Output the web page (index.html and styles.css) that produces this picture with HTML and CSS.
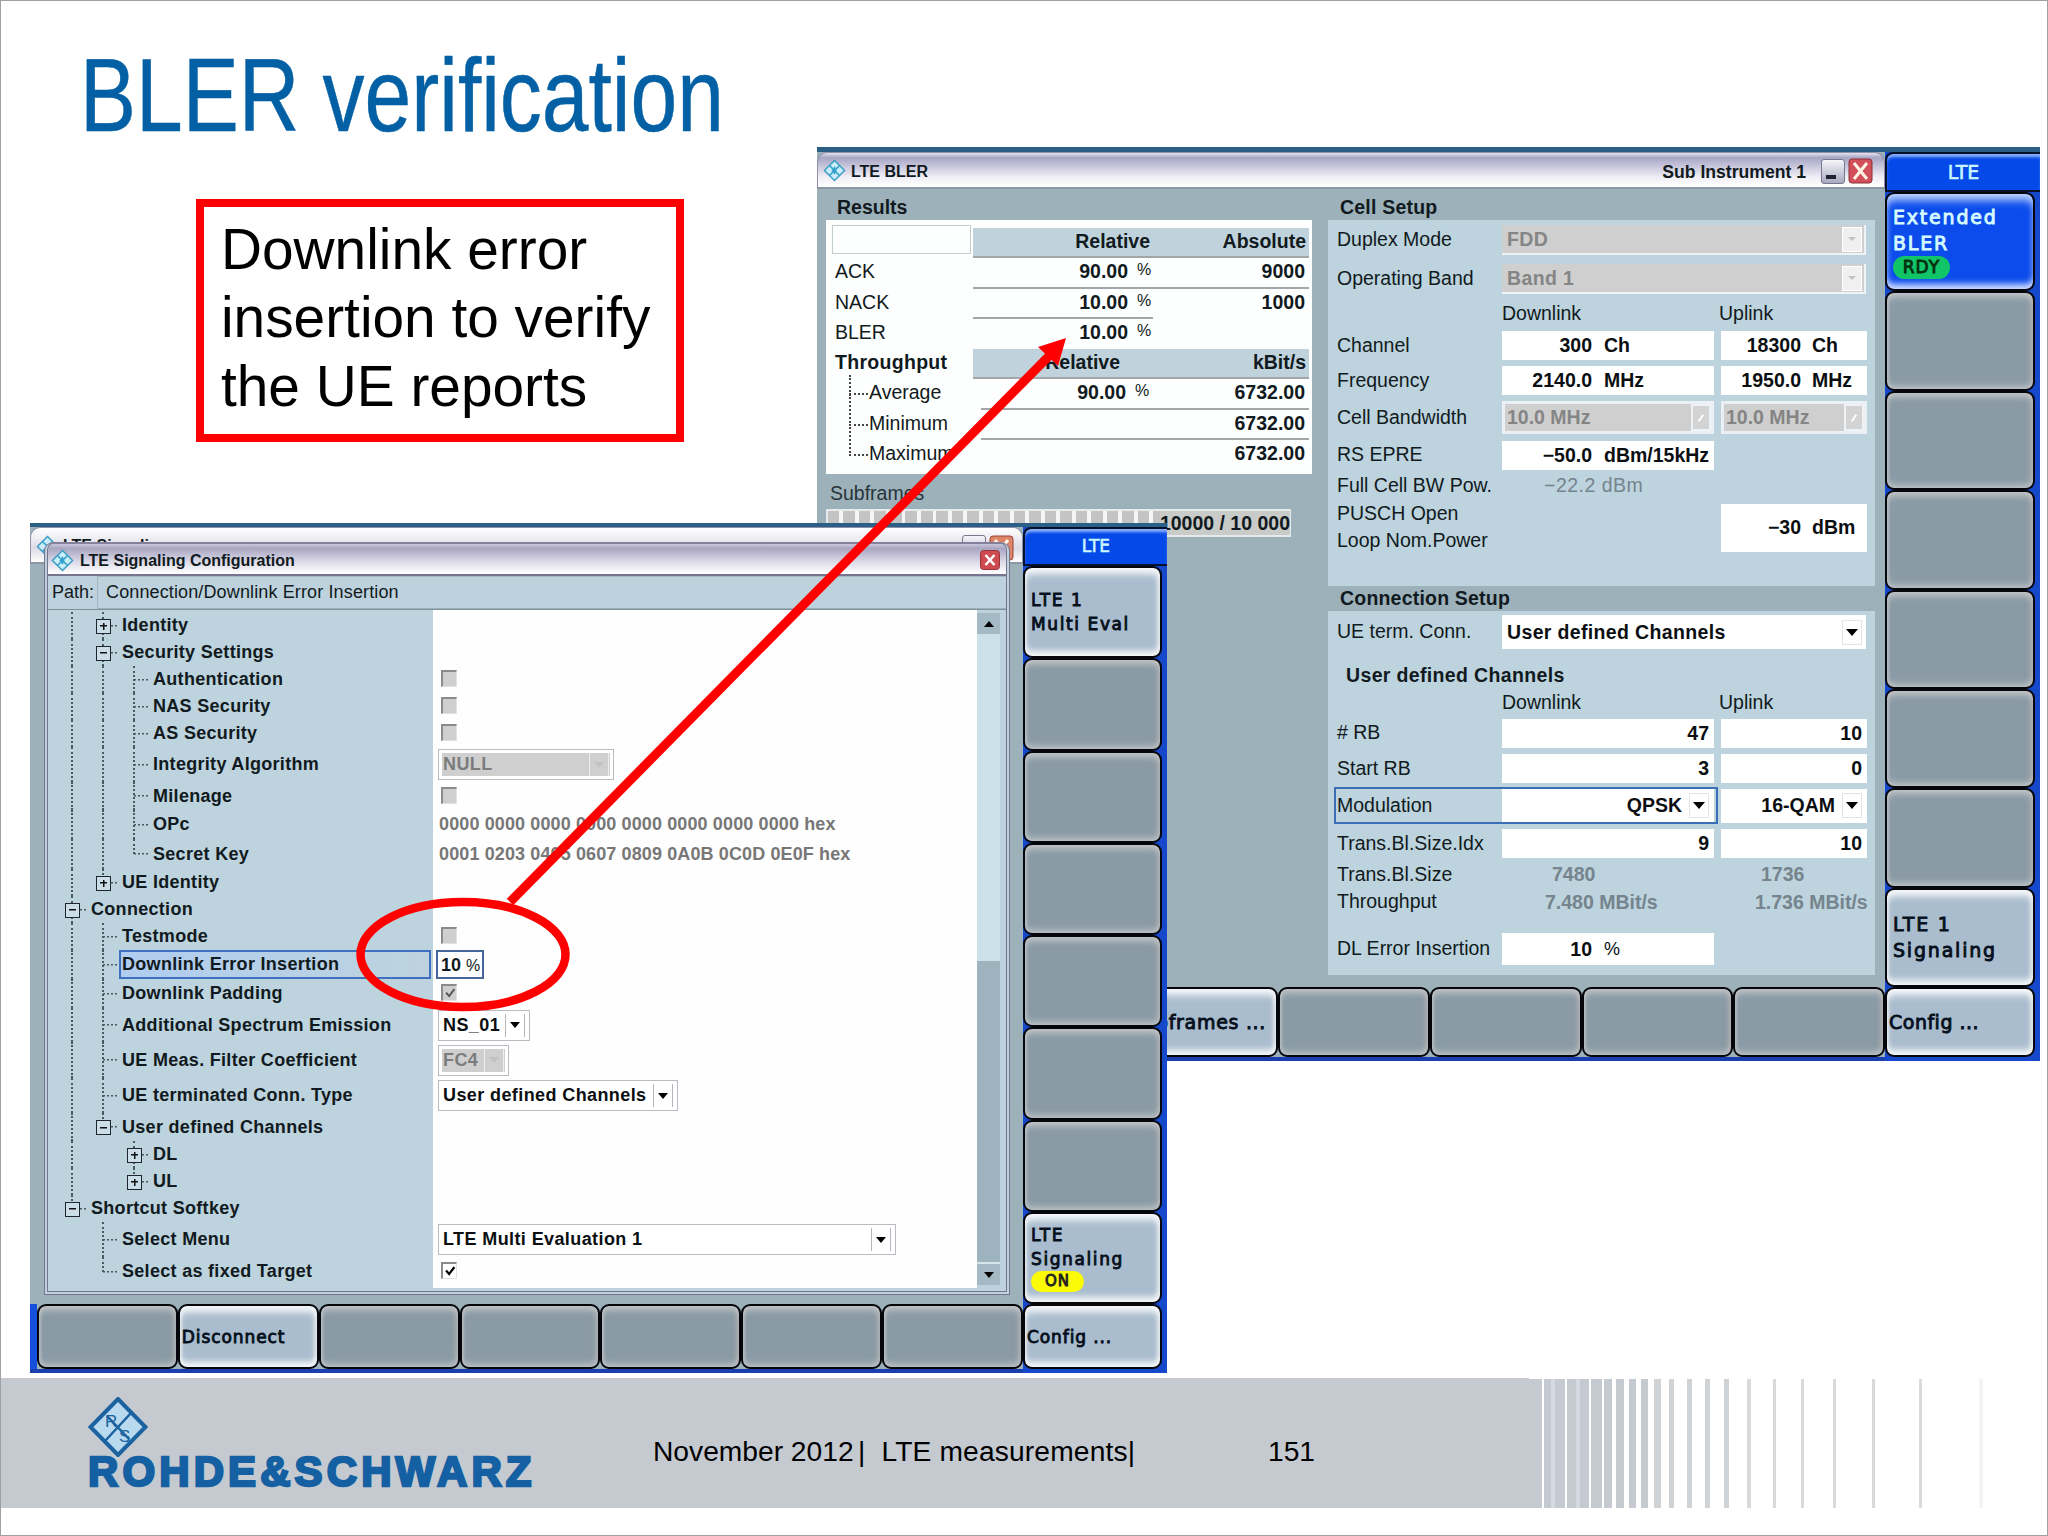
FILE: index.html
```
<!doctype html>
<html>
<head>
<meta charset="utf-8">
<title>BLER verification</title>
<link rel="stylesheet" href="styles.css">
</head>

<body>
<div class="slide">
<h1>BLER verification</h1>
<div class="note">Downlink error<br>insertion to verify<br>the UE reports</div>

<!-- LTE BLER window -->
<div class="win bler">
	<div class="main">
		<div class="bar">
			<svg class="rs" viewBox="0 0 24 24"><path d="M12 1.500L22.500 12 12 22.500 1.500 12z" fill="#c9eefa" stroke="#3a9cc4" stroke-width="1.500"/><path d="M7 7l10 10M17 7L7 17M9 12h5M12 8v8" stroke="#2f9fc9" stroke-width="1.600" fill="none"/></svg>
			<b>LTE BLER</b>
			<b class="sub">Sub Instrument 1</b>
			<i class="min"></i>
			<svg class="close" viewBox="0 0 25 26"><rect x="1" y="1" width="23" height="24" rx="3" fill="#d2505a" stroke="#8d3038"/><path d="M6 5l13 16M19 5L6 21" stroke="#fff4e6" stroke-width="3"/></svg>
		</div>
		<div class="body">
			<div class="left">
				<h2>Results</h2>
				<div class="results">
					<span><i class="blank"></i></span><b class="hd ul">Relative</b><b class="hd ul abs">Absolute</b>
					<span>ACK</span><b class="ul">90.00<sup>%</sup></b><b class="ul abs">9000</b>
					<span>NACK</span><b class="ul">10.00<sup>%</sup></b><b class="abs">1000</b>
					<span>BLER</span><b>10.00<sup>%</sup></b><b></b>
					<span class="thr">Throughput</span><b class="hd ul mid">Relative</b><b class="hd ul abs kb">kBit/s</b>
					<span class="sub first">Average</span><b class="ul in">90.00<sup>%</sup></b><b class="ul abs">6732.00</b>
					<span class="sub">Minimum</span><b class="ul in"></b><b class="ul abs">6732.00</b>
					<span class="sub">Maximum</span><b></b><b class="abs">6732.00</b>
				</div>
				<div class="subf">Subframes</div>
				<div class="progress"><b>10000 / 10 000</b></div>
			</div>
			<div class="right">
				<h2>Cell Setup</h2>
				<div class="panel p1">
					<div class="r h40"><label>Duplex Mode</label><div class="f wide off">FDD<i class="dd"></i></div></div>
					<div class="r h38"><label>Operating Band</label><div class="f wide off">Band 1<i class="dd"></i></div></div>
					<div class="r h30"><label></label><span class="dl">Downlink</span><span class="upl">Uplink</span></div>
					<div class="r h35"><label>Channel</label><div class="f dl"><u>300</u>Ch</div><div class="f up"><u>18300</u>Ch</div></div>
					<div class="r h35"><label>Frequency</label><div class="f dl"><u>2140.0</u>MHz</div><div class="f up"><u>1950.0</u>MHz</div></div>
					<div class="r h39"><label>Cell Bandwidth</label><div class="f dl off bw">10.0 MHz<i class="dd"></i></div><div class="f up off bw">10.0 MHz<i class="dd"></i></div></div>
					<div class="r h36"><label>RS EPRE</label><div class="f dl"><u>&minus;50.0</u>dBm/15kHz</div></div>
					<div class="r h25"><label>Full Cell BW Pow.</label><span class="g g1">&minus;22.2 dBm</span></div>
					<div class="r h59"><label>PUSCH Open<br>Loop Nom.Power</label><span class="dl"></span><div class="f up tall"><u>&minus;30</u>dBm</div></div>
				</div>
				<h2 class="h2b">Connection Setup</h2>
				<div class="panel p2">
					<div class="r h42"><label>UE term. Conn.</label><div class="f wide on">User defined Channels<i class="dd"></i></div></div>
					<h3>User defined Channels</h3>
					<div class="r h24"><label></label><span class="dl">Downlink</span><span class="upl">Uplink</span></div>
					<div class="r h38"><label># RB</label><div class="f dl end">47</div><div class="f up end">10</div></div>
					<div class="r h33"><label>Start RB</label><div class="f dl end">3</div><div class="f up end">0</div></div>
					<div class="r h41"><i class="focus"></i><label>Modulation</label><div class="f dl mod">QPSK<i class="dd"></i></div><div class="f up mod">16-QAM<i class="dd"></i></div></div>
					<div class="r h35"><label>Trans.Bl.Size.Idx</label><div class="f dl end">9</div><div class="f up end">10</div></div>
					<div class="r h27"><label>Trans.Bl.Size</label><span class="g g2">7480</span><span class="g">1736</span></div>
					<div class="r h28"><label>Throughput</label><span class="g g3">7.480 MBit/s</span><span class="g">1.736 MBit/s</span></div>
					<div class="r h36 dle"><label>DL Error Insertion</label><div class="f dl"><u>10</u><em>%</em></div></div>
				</div>
			</div>
		</div>
		<div class="keys">
			<div class="key"></div><div class="key"></div><div class="key lt">Subframes ...</div><div class="key"></div><div class="key"></div><div class="key"></div><div class="key"></div>
		</div>
	</div>
	<div class="side">
		<div class="top">LTE</div>
		<div class="key act">Extended<br>BLER<span class="pill">RDY</span></div>
		<div class="key"></div><div class="key"></div><div class="key"></div><div class="key"></div><div class="key"></div><div class="key"></div>
		<div class="key lt">LTE 1<br>Signaling</div>
		<div class="key lt cfg">Config ...</div>
	</div>
</div>

<!-- LTE Signaling window -->
<div class="win sig">
	<div class="main">
		<div class="bar">
			<svg class="rs" viewBox="0 0 24 24"><path d="M12 1.500L22.500 12 12 22.500 1.500 12z" fill="#c9eefa" stroke="#3a9cc4" stroke-width="1.500"/><path d="M7 7l10 10M17 7L7 17" stroke="#2f9fc9" stroke-width="1.600"/></svg>
			<b>LTE Signaling</b>
			<i class="min"></i>
			<svg class="close" viewBox="0 0 25 26"><rect x="1" y="1" width="23" height="24" rx="3" fill="#dd8469" stroke="#9a4632"/><path d="M6 5l13 16M19 5L6 21" stroke="#fff4e6" stroke-width="3"/></svg>
		</div>
		<div class="dialog">
			<div class="dbar">
				<svg class="rs" viewBox="0 0 24 24"><path d="M12 1.500L22.500 12 12 22.500 1.500 12z" fill="#c9eefa" stroke="#3a9cc4" stroke-width="1.500"/><path d="M7 7l10 10M17 7L7 17M9 12h5M12 8v8" stroke="#2f9fc9" stroke-width="1.600" fill="none"/></svg>
				<b>LTE Signaling Configuration</b>
				<svg class="x" viewBox="0 0 20 20"><rect x=".5" y=".5" width="19" height="19" rx="3" fill="#cf4a50" stroke="#96343a"/><path d="M5.500 5l9 10M14.500 5l-9 10" stroke="#fff" stroke-width="2.600"/></svg>
			</div>
			<div class="path"><span>Path:</span><p>Connection/Downlink Error Insertion</p></div>
			<div class="conf">
				<div class="tree">
					<div class="row"><i class="v"></i><i class="v h p"></i><b>Identity</b></div>
					<div class="row"><i class="v"></i><i class="v h m"></i><b>Security Settings</b></div>
					<div class="row"><i class="v"></i><i class="v"></i><i class="v h"></i><b>Authentication</b><s><i class="cb"></i></s></div>
					<div class="row"><i class="v"></i><i class="v"></i><i class="v h"></i><b>NAS Security</b><s><i class="cb"></i></s></div>
					<div class="row"><i class="v"></i><i class="v"></i><i class="v h"></i><b>AS Security</b><s><i class="cb"></i></s></div>
					<div class="row h35"><i class="v"></i><i class="v"></i><i class="v h"></i><b>Integrity Algorithm</b><s><span class="sel off w1">NULL<i class="dd"></i></span></s></div>
					<div class="row h28"><i class="v"></i><i class="v"></i><i class="v h"></i><b>Milenage</b><s><i class="cb"></i></s></div>
					<div class="row h29"><i class="v"></i><i class="v"></i><i class="v h"></i><b>OPc</b><s class="hex">0000 0000 0000 0000 0000 0000 0000 0000 hex</s></div>
					<div class="row h30"><i class="v"></i><i class="v"></i><i class="e h"></i><b>Secret Key</b><s class="hex">0001 0203 0405 0607 0809 0A0B 0C0D 0E0F hex</s></div>
					<div class="row"><i class="v"></i><i class="e h p"></i><b>UE Identity</b></div>
					<div class="row"><i class="v h m"></i><b>Connection</b></div>
					<div class="row"><i class="v"></i><i class="v h"></i><b>Testmode</b><s><i class="cb"></i></s></div>
					<div class="row h29"><i class="v"></i><i class="v h"></i><b class="cur">Downlink Error Insertion</b><s><span class="val">10 <em>%</em></span></s></div>
					<div class="row h29"><i class="v"></i><i class="v h"></i><b>Downlink Padding</b><s><i class="cb"><svg viewBox="0 0 16 16"><path d="M3.500 7.500l3.500 4 6-8" fill="none" stroke="#555" stroke-width="2.200"/></svg></i></s></div>
					<div class="row h34"><i class="v"></i><i class="v h"></i><b>Additional Spectrum Emission</b><s><span class="sel w2">NS_01<i class="dd"></i></span></s></div>
					<div class="row h36"><i class="v"></i><i class="v h"></i><b>UE Meas. Filter Coefficient</b><s><span class="sel off w3">FC4<i class="dd"></i></span></s></div>
					<div class="row h35"><i class="v"></i><i class="v h"></i><b>UE terminated Conn. Type</b><s><span class="sel w4">User defined Channels<i class="dd"></i></span></s></div>
					<div class="row h28"><i class="v"></i><i class="e h m"></i><b>User defined Channels</b></div>
					<div class="row"><i class="v"></i><i></i><i class="v h p"></i><b>DL</b></div>
					<div class="row"><i class="v"></i><i></i><i class="e h p"></i><b>UL</b></div>
					<div class="row"><i class="e h m"></i><b>Shortcut Softkey</b></div>
					<div class="row h35"><i></i><i class="v h"></i><b>Select Menu</b><s><span class="sel w5">LTE Multi Evaluation 1<i class="dd"></i></span></s></div>
					<div class="row h29"><i></i><i class="e h"></i><b>Select as fixed Target</b><s><i class="cb on"><svg viewBox="0 0 16 16"><path d="M3.500 7.500l3.500 4 6-8" fill="none" stroke="#000" stroke-width="2.600"/></svg></i></s></div>
				</div>
				<div class="scroll"><i class="s-up"></i><i class="thumb"></i><i class="track"></i><i class="s-down"></i></div>
			</div>
		</div>
		<div class="keys">
			<div class="key"></div><div class="key lt">Disconnect</div><div class="key"></div><div class="key"></div><div class="key"></div><div class="key"></div><div class="key"></div>
		</div>
	</div>
	<div class="side">
		<div class="top">LTE</div>
		<div class="key lt">LTE 1<br>Multi Eval</div>
		<div class="key"></div><div class="key"></div><div class="key"></div><div class="key"></div><div class="key"></div><div class="key"></div>
		<div class="key lt on">LTE<br>Signaling<span class="pill">ON</span></div>
		<div class="key lt cfg">Config ...</div>
	</div>
</div>

<svg class="marks" width="2048" height="1536">
	<ellipse cx="463" cy="954.500" rx="102.500" ry="52.500" fill="none" stroke="#f00" stroke-width="8.500"/>
	<path d="M510 902L1051 354" stroke="#f00" stroke-width="9"/>
	<path d="M1066 338L1038 347 1058 366z" fill="#f00"/>
</svg>

<div class="footer">
	<div class="logo">
		<svg width="60" height="60" viewBox="0 0 60 60"><path d="M30 2L57.500 30 30 58 2.500 30z" fill="#b9d9ee" stroke="#1b62a0" stroke-width="4"/><path d="M17 44L43 16M19 19l22 23" stroke="#1b62a0" stroke-width="2.500"/><text x="17" y="30" font-size="17">R</text><text x="31" y="45" font-size="17">S</text></svg>
		<b>ROHDE&amp;SCHWARZ</b>
	</div>
	<span class="date">November 2012</span><span class="name">|&nbsp; LTE measurements|</span><span>151</span>
	<svg class="lines" width="520" height="129" fill="#c4cad0">
		<path d="M0 0h15v129H0zM17 0h21v129H17zM40 0h22v129H40zM64 0h11v129H64zM77 0h8v129h-8zM89 0h8v129h-8zM102 0h7v129h-7zM114 0h7v129h-7z"/>
		<path fill="#cfd3d6" d="M127 0h7v129h-7zM142 0h5v129h-5zM160 0h5v129h-5zM178 0h5v129h-5zM197 0h5v129h-5z"/>
		<path fill="#dadadd" d="M220 0h4v129h-4zM246 0h3v129h-3zM274 0h3v129h-3zM306 0h3v129h-3zM345 0h3v129h-3zM392 0h3v129h-3z"/>
		<path fill="#f3f2f5" d="M452 0h4v129h-4z"/>
		<path fill="#d3dae1" d="M24 0h4v129h-4zM49 0h4v129h-4z"/>
	</svg>
</div>
</div>
</body>
</html>
```
FILE: styles.css
```
*{ margin:0; padding:0; box-sizing:border-box;}
i,em,s,u{ font-style:normal; text-decoration:none;}
body{ background:#fff; font-family:"Liberation Sans",Arial,sans-serif;}
.slide{ width:2048px; height:1536px; position:relative; overflow:hidden; border:1px solid #9ca1a4; display:flex; flex-direction:column;}
h1{ margin:43px 0 0 79px; font-size:103px; line-height:103px; font-weight:normal; color:#0460a4; white-space:nowrap; transform:scaleX(.815); transform-origin:0 0; -webkit-text-stroke:.5px;}
.note{ margin:52px 0 0 195px; width:488px; height:243px; border:8px solid #f00; padding:9px 0 0 17px; font-size:56.8px; line-height:68.3px; white-space:nowrap;}

/* windows */
.win{ position:absolute; display:flex; background:#1648cc; font-size:19.5px; color:#111a20; white-space:nowrap;}
.main{ background:#9db1ba; display:flex; flex-direction:column;}
.bler{ left:816px; top:146px; width:1223px; height:914px; border-top:5px solid #2c5f86;}
.bler .main{ width:1068px;}
.bar{ display:flex; align-items:center; height:37px; padding:0 11px 0 5px; border-radius:10px 10px 0 0; border:1px solid #8f8fa8; border-bottom:2px solid #8b97a2; background:linear-gradient(#e4e2ee 0,#a8a5c5 14%,#c9c7dc 40%,#efeef5 70%,#fff 100%);}
.bar b{ font-size:16px; margin-left:5px; padding-top:4px;}
.bar .sub{ margin-left:auto; font-size:17.6px;}
.rs{ width:23px; height:23px;}
.min{ width:24px; height:25px; margin:2px 3px 0 15px; border:1px solid #77778f; border-radius:3px; background:linear-gradient(#f5f5fa,#a9a9c0); display:flex; align-items:flex-end; padding:4px;}
.min:before{ content:""; width:10px; height:4px; background:#223;}
.close{ width:25px; height:26px; margin-top:2px;}
.body{ display:flex; height:798px;}
.left{ width:511px; padding-left:9px;}
h2{ font-size:19.5px; line-height:31px; height:31px; padding:3px 0 0 11px;}
.results{ width:486px; height:254px; background:#fdfefe; padding:8px 3px 0 0; display:grid; grid-template-columns:147px 180px 156px; grid-auto-rows:30.3px;}
.results>*{ line-height:27px; position:relative;}
.results>span{ padding-left:9px;}
.results b{ padding-right:25px; text-align:right;}
.results b.abs{ padding-right:4px;}
.results b.kb{ padding-right:1px;}
.results b.hd{ background:#c0d3dd; padding-right:3px;}
.results b.mid{ padding-right:33px;}
.results b.in{ margin-left:8px; padding-right:27px;}
.results b.ul{ border-bottom:2.500px solid #a3a7a9;}
.results sup{ position:absolute; font-size:16px; font-weight:normal; margin-left:9px; top:-1px; line-height:26px;}
.results .blank{ display:block; margin:-3px 0 0 -3px; width:139px; height:29px; border:1px solid #c3cfca;}
.results .thr{ font-weight:bold; letter-spacing:.3px;}
.results .sub{ padding-left:43px;}
.results .sub:before{ content:""; position:absolute; left:23px; top:-16px; height:30px; width:17px; border-left:2px dotted #444; border-bottom:2px dotted #444;}
.results .first:before{ top:-4px; height:18px;}
.subf{ height:35px; line-height:38px; padding-left:4px; color:#27343b;}
.progress{ width:465px; height:28px; background:repeating-linear-gradient(90deg,#c4c4c4 0 11.500px,#f4f6f6 11.500px 15.500px); border:2px solid #e6eaec; text-align:right; line-height:24px;}
.progress b{ display:inline-block; background:#c9cbc9; margin-right:-1px;}
.right{ width:547px;}
.right h2{ padding-left:12px; letter-spacing:.2px;}
.right .h2b{ height:25px; line-height:24px; padding-top:0;}
.panel{ background:#bdd3de; position:relative;}
.p1{ height:366px;}
.p2{ height:364px;}
.r{ display:flex; align-items:center; height:35px; position:relative;}
.r label{ width:174px; padding:0 0 1px 9px; line-height:27px;}
.row{ height:27px;}
.h24{ height:24px;} .h25{ height:25px;} .h27{ height:27px;} .h28{ height:28px;} .h29{ height:29px;} .h30{ height:30px;} .h33{ height:33px;} .h34{ height:34px;} .h35{ height:35px;} .h36{ height:36px;} .h38{ height:38px;} .h39{ height:39px;} .h40{ height:40px;} .h41{ height:41px;} .h42{ height:42px;} .h59{ height:59px;}
.dl{ width:212px; margin-right:7px;}
.upl{ margin-left:-2px;}
.f{ height:29px; background:#fff; font-weight:bold; display:flex; align-items:center; color:#0b0f12;}
.f.up{ width:146px;}
.f u{ width:90px; text-align:right; margin-right:12px;}
.f.up u{ width:80px; margin-right:11px;}
.f.wide{ width:364px; padding-left:5px; height:30px; letter-spacing:.35px;}
.f.wide.on{ height:34px;}
.f.off{ background:#cfcfcf; color:#858585; border-bottom:2px solid #eef3f5; border-right:2px solid #eef3f5;}
.f.bw{ height:33px; border:3px solid #eaf0f3; padding-left:2px;}
.f.end{ justify-content:flex-end; padding-right:5px;}
.f.mod{ justify-content:flex-end; height:34px;}
.f.tall{ height:48px;}
.f em{ font-weight:normal; font-size:18px;}
.dd{ width:20px; height:25px; margin:0 4px 0 auto; display:flex; align-items:center; justify-content:center; border:1px solid #e2e4e6;}
.dd:before{ content:""; border:6px solid transparent; border-top:7px solid #000; border-bottom:0;}
.off .dd{ background:#f0f0f0; border-color:#fff; margin-right:2px;}
.off .dd:before{ border-width:4px 4px 0; border-top-color:#c2c2c2;}
.bw .dd{ background:#d3d3d3; border:2px solid #eef2f4; margin-right:0; height:27px;}
.bw .dd:before{ border:0; width:2px; height:8px; background:#fff; transform:rotate(35deg);}
.mod .dd{ margin:0 5px 0 7px;}
.g{ color:#75848d; font-weight:bold;}
.r .g1{ margin-left:42px; font-weight:normal; letter-spacing:.5px;}
.g2{ margin-left:50px; width:209px;}
.g3{ margin-left:43px; width:210px;}
h3{ font-size:19.5px; margin-top:7px; height:30px; line-height:30px; padding-left:18px; letter-spacing:.35px;}
.focus{ position:absolute; left:6px; top:2px; width:384px; height:37px; border:2px solid #3b6fb5; z-index:1;}
.dle{ margin-top:15px;}
.dle .f{ height:32px;}

/* softkeys */
.keys{ display:flex; margin-top:auto;}
.key{ border:2px solid #05070c; border-radius:9px; background:#8a9ba6; box-shadow:inset 0 6px 6px -2px #c2c4c6,inset 0 -5px 6px -2px #bcc2c6,inset 2px 0 2px #a6b0b6,inset -5px 0 5px -2px #a4a5aa; display:flex; flex-direction:column; justify-content:center; align-items:flex-start; padding-left:6px; font:19px/26px "DejaVu Sans",sans-serif; letter-spacing:1.800px; -webkit-text-stroke:.9px; color:#06101c;}
.key.lt{ background:#aabdce; box-shadow:inset 0 8px 7px -2px #f6f8fa,inset 0 -7px 6px -2px #f4f7f9,inset 2px 0 2px #ccd6dd,inset -3px 0 4px #d5dbe1;}
.key.act{ background:#0d4cec; color:#d6fbff; box-shadow:inset 0 9px 8px -3px #c2d8ff,inset 0 -7px 6px -2px #d0deff;}
.keys .key{ flex:1; padding-left:2px; letter-spacing:.7px;}
.bler .keys{ height:70px; margin-bottom:4px; padding-left:6px; box-shadow:0 4px #1b3fae;}
.side{ display:flex; flex-direction:column; flex:1; padding-right:5px;}
.top{ background:#0549e8; height:40px; margin-right:-5px; border:2px solid #04102c; border-right:0; border-radius:8px 0 0 0; box-shadow:inset 0 4px 3px -1px #8cb2f8; color:#c9f6ff; text-align:center; font:19px/37px "DejaVu Sans",sans-serif; -webkit-text-stroke:.6px;}
.side .key{ height:99.400px;}
.side .cfg{ height:70px; padding-left:2px; letter-spacing:.5px;}
.pill{ background:#10c468; color:#07300f; border-radius:12px; height:23px; width:57px; line-height:23px; font-size:17px; text-align:center; letter-spacing:1px;}

/* signaling window */
.sig{ left:29px; top:522px; width:1137px; height:850px; border-top:4px solid #2c5f86; font-size:18px;}
.sig .main{ width:993px; position:relative;}
.sig .bar{ padding-right:8px; align-items:flex-start; background:linear-gradient(#fff,#dcdbe6 60%,#fff);}
.sig .bar b{ margin:9px auto 0 4px; padding:0; height:6px; line-height:18px; overflow:hidden;}
.sig .bar .rs{ margin-top:7px;}
.sig .bar .min,.sig .bar .close{ margin-top:7px;}
.dialog{ position:absolute; left:14px; top:15px; width:966px; height:753px; border:4px double #77748f; border-radius:9px 9px 0 0; border-top:2px solid #85819c; background:#bdd2dd;}
.dbar{ display:flex; align-items:center; height:32px; padding:0 5px 0 3px; background:linear-gradient(#c9c6dc 0,#a9a6c2 15%,#dddbe8 60%,#fff); border-bottom:2px solid #77748f; border-radius:7px 7px 0 0;}
.dbar b{ font-size:16px; margin-left:6px; padding-top:4px;}
.dbar .rs{ margin-top:3px;}
.dbar .x{ width:20px; height:20px; margin:2px 1px 0 auto;}
.path{ display:flex; height:34px; line-height:32px; border-bottom:1px solid #7f9199; padding-left:4px;}
.path span{ width:46px; border-right:1px solid #a0b6c0;}
.path p{ padding-left:8px; letter-spacing:.13px; border-bottom:1px solid #9cb0b9; border-top:1px solid #a5b8c1; flex:1; line-height:30px;}
.conf{ display:flex; height:678px;}
.tree{ width:929px; padding-top:2px; background:linear-gradient(90deg,#bdd3de 385px,#fefefe 385px);}
.row{ display:flex; padding-left:8px; position:relative; align-items:center;}
.row>i{ width:31px; align-self:stretch; position:relative; flex:none;}
.row>i.v:before,.row>i.e:before{ content:""; position:absolute; left:15px; top:0; bottom:0; border-left:2px dotted #4a5a63;}
.row>i.e:before{ bottom:50%;}
.row>i.h{ background:repeating-linear-gradient(90deg,#4a5a63 0 2px,transparent 2px 4px) 16px 50%/15px 1.500px no-repeat;}
.row>i.p:after,.row>i.m:after{ content:""; position:absolute; left:9px; top:50%; margin-top:-7px; width:13px; height:13px; border:1.500px solid #1c262c; background:linear-gradient(#111,#111) 50% 50%/7px 1.500px no-repeat #cbdde6;}
.row>i.p:after{ background:linear-gradient(#111,#111) 50% 50%/7px 1.500px no-repeat,linear-gradient(#111,#111) 50% 50%/1.500px 7px no-repeat #cbdde6;}
.row b{ padding-left:4px; letter-spacing:.3px;}
.row b.cur{ align-self:stretch; line-height:25px; width:312px; margin-left:1px; padding-left:1px; border:2px solid #3e6fc0; background:linear-gradient(90deg,#b0cdf0,#bdd3de);}
.row s{ position:absolute; left:388px; top:0; height:100%; display:flex; align-items:center; font-weight:bold; padding-left:2px;}
.row .hex{ padding-left:3px; color:#777; letter-spacing:.12px;}
.cb{ width:16px; height:17px; margin:0 0 2px 3px; background:#cfcfcf; border:1px solid #e2e2e2; border-top:2px solid #8b8b8b; border-left:2px solid #8b8b8b;}
.cb.on{ background:#fff;}
.cb svg{ display:block; width:14px; height:14px;}
.sel{ display:flex; align-items:center; height:31px; border:1px solid #bdb9c2; outline:3px solid #fff; outline-offset:-4px; padding-left:4px; background:#fff; color:#0b0f12; letter-spacing:.4px;}
.sel.off{ background:#cfcfcf; color:#7c7c7c;}
.sel .dd{ border-color:#b5b5bb;}
.sel .dd:before{ border-width:6px 5px 0;}
.sel.off .dd{ background:#cfcfcf; border-color:#eee; margin-right:4px;}
.w1{ width:176px;} .w2{ width:92px;} .w3{ width:71px;} .w4{ width:240px;} .w5{ width:458px;}
.val{ width:48px; height:29px; line-height:26px; padding-left:3px; border:2px solid #44689c; margin-left:-2px; white-space:pre;}
.val em{ font-weight:normal; font-size:16px;}
.scroll{ width:29px; display:flex; flex-direction:column; padding:3px 6px 3px 0; background:#bdd2dd;}
.scroll i{ display:flex; align-items:center; justify-content:center;}
.s-up,.s-down{ height:21px; background:#a3b9c3;}
.s-up:before{ content:""; border:5px solid transparent; border-bottom:6px solid #000; border-top:0;}
.s-down:before{ content:""; border:5px solid transparent; border-top:6px solid #000; border-bottom:0;}
.thumb{ height:327px; background:#cbe0e8;}
.track{ flex:1; background:#9db3bd; border-bottom:2px solid #d5e5eb;}
.sig .keys{ height:65px; margin-bottom:4px; padding-left:7px; background:linear-gradient(90deg,#1450dc 7px,transparent 7px); box-shadow:0 4px #1b3fae;}
.sig .top{ height:39px; line-height:35px; font-size:17px;}
.sig .key{ font-size:17px; line-height:24px; letter-spacing:1.600px;}
.sig .keys .key,.sig .side .cfg{ letter-spacing:.9px;}
.sig .side .key{ height:92.250px;}
.sig .side .cfg{ height:65px;}
.sig .pill{ background:#fbfb08; color:#222; height:21px; width:53px; line-height:21px; font-size:15px;}

.marks{ position:absolute; left:-1px; top:-1px;}

/* footer */
.footer{ margin-top:auto; margin-bottom:27px; height:130px; display:flex; align-items:center; background:linear-gradient(90deg,#c4cad0 1528px,#fff 1528px); font-size:28.200px; white-space:nowrap;}
.logo{ width:652px; padding:19px 0 0 87px; height:130px; color:#1460a2;}
.logo svg{ display:block; fill:#1b62a0;}
.logo b{ display:block; font-size:42px; line-height:30px; letter-spacing:4.100px; -webkit-text-stroke:2.400px #1460a2;}
.footer>span{ margin-top:16px;}
.date{ width:205px;}
.name{ width:410px; letter-spacing:.15px;}
.lines{ margin-left:auto;}
```
